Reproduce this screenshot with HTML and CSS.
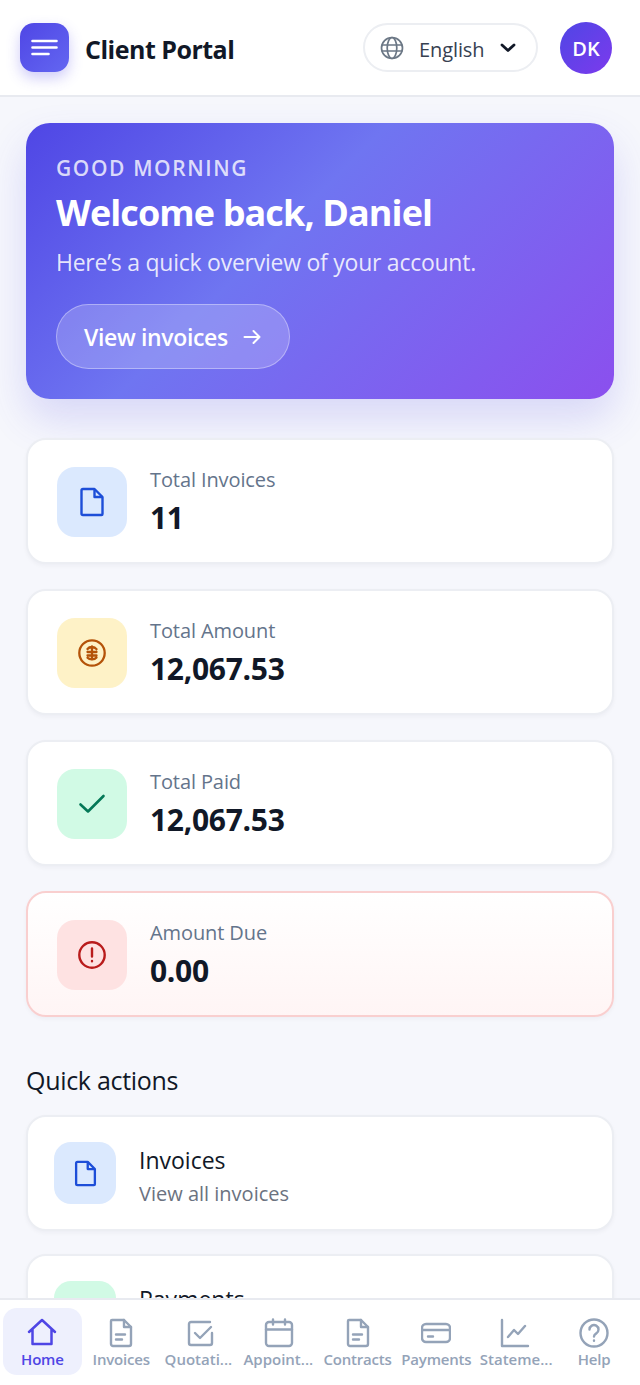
FILE: index.html
```html
<!DOCTYPE html>
<html lang="en">
<head>
    <meta charset="UTF-8">
    <title>Client Portal</title>
    <link rel="stylesheet" href="styles.css">
</head>
<body>
<div class="app">
    <header class="topbar">
        <button class="menu-btn">
            <svg width="30" height="30" viewBox="0 0 30 30" fill="none" stroke="#fff" stroke-width="2.600" stroke-linecap="round"><path d="M2.500 8h24M2.500 14.500h24M2.500 21h16"/></svg>
        </button>
        <div class="brand">Client Portal</div>
        <div class="lang">
            <svg width="24" height="24" viewBox="0 0 24 24" fill="none" stroke="#6b7785" stroke-width="1.700"><circle cx="12" cy="12" r="10.500"/><ellipse cx="12" cy="12" rx="4.800" ry="10.500"/><path d="M1.500 9h21M1.500 15h21"/></svg>
            <span class="lang-name">English</span>
            <svg width="16" height="16" viewBox="0 0 16 16" fill="none" stroke="#111827" stroke-width="2.800" stroke-linecap="round" stroke-linejoin="round"><path d="M2 5l6 5.500L14 5"/></svg>
        </div>
        <div class="avatar">DK</div>
    </header>

    <main class="content">
        <section class="hero">
            <div class="hero-eyebrow">GOOD MORNING</div>
            <h1 class="hero-title">Welcome back, Daniel</h1>
            <p class="hero-sub">Here’s a quick overview of your account.</p>
            <a class="hero-btn">View invoices
                <svg width="18" height="18" viewBox="0 0 18 18" fill="none" stroke="#fff" stroke-width="2" stroke-linecap="round" stroke-linejoin="round"><path d="M1.500 9h15M10.500 3l6 6-6 6"/></svg>
            </a>
        </section>

        <section class="stats">
            <div class="stat">
                <div class="tile tile-blue">
                    <svg width="28" height="32" viewBox="0 0 28 32" fill="none" stroke="#1d4ed8" stroke-width="2.400" stroke-linejoin="round"><path d="M5 3h11.500l8 8v17a1 1 0 0 1-1 1H5a1.500 1.500 0 0 1-1.500-1.500v-23A1.500 1.500 0 0 1 5 3z"/><path d="M16.500 3v8h8"/></svg>
                </div>
                <div class="stat-text"><div class="stat-label">Total Invoices</div><div class="stat-value">11</div></div>
            </div>
            <div class="stat">
                <div class="tile tile-yellow">
                    <svg width="30" height="30" viewBox="0 0 30 30" fill="none" stroke="#b45309" stroke-width="2.300" stroke-linecap="round" stroke-linejoin="round"><circle cx="15" cy="15" r="12.700"/><path d="M10.500 11c1-1.300 2.600-2 4.500-2s3.500.8 4.500 2.200M10.500 14h9M10.500 17.500h9M10.500 19.800c1 1 2.600 1.500 4.500 1.500s3.500-.6 4.500-1.800M15 8.500v13"/></svg>
                </div>
                <div class="stat-text"><div class="stat-label">Total Amount</div><div class="stat-value">12,067.53</div></div>
            </div>
            <div class="stat">
                <div class="tile tile-green">
                    <svg width="30" height="30" viewBox="0 0 30 30" fill="none" stroke="#047857" stroke-width="2.600" stroke-linecap="round" stroke-linejoin="round"><path d="M3.500 15.500l7.500 7L26.500 7"/></svg>
                </div>
                <div class="stat-text"><div class="stat-label">Total Paid</div><div class="stat-value">12,067.53</div></div>
            </div>
            <div class="stat stat-due">
                <div class="tile tile-red">
                    <svg width="30" height="30" viewBox="0 0 30 30" fill="none" stroke="#b91c1c" stroke-width="2.400" stroke-linecap="round"><circle cx="15" cy="15" r="12.700"/><path d="M15 8.500v8M15 21v.300"/></svg>
                </div>
                <div class="stat-text"><div class="stat-label">Amount Due</div><div class="stat-value">0.00</div></div>
            </div>
        </section>

        <h2 class="section-title">Quick actions</h2>

        <section class="actions">
            <div class="action">
                <div class="tile tile-blue tile-sm">
                    <svg width="25" height="29" viewBox="0 0 28 32" fill="none" stroke="#1d4ed8" stroke-width="2.600" stroke-linejoin="round"><path d="M5 3h11.500l8 8v17a1 1 0 0 1-1 1H5a1.500 1.500 0 0 1-1.500-1.500v-23A1.500 1.500 0 0 1 5 3z"/><path d="M16.500 3v8h8"/></svg>
                </div>
                <div class="action-text"><div class="action-title">Invoices</div><div class="action-sub">View all invoices</div></div>
            </div>
            <div class="action">
                <div class="tile tile-green tile-sm"></div>
                <div class="action-text"><div class="action-title">Payments</div><div class="action-sub">&nbsp;</div></div>
            </div>
        </section>
    </main>

    <nav class="tabs">
        <a class="tab tab-active">
            <svg width="30" height="30" viewBox="0 0 30 30" fill="none" stroke="currentColor" stroke-width="2.500" stroke-linejoin="round" stroke-linecap="round"><path d="M2 14L15 2l13 12M5.500 11.500V26h19V11.500"/></svg>
            <span>Home</span>
        </a>
        <a class="tab">
            <svg width="30" height="30" viewBox="0 0 30 30" fill="none" stroke="currentColor" stroke-width="2.400" stroke-linejoin="round" stroke-linecap="round"><path d="M6 2h12l7 7v17a2 2 0 0 1-2 2H7a2 2 0 0 1-2-2V3a1 1 0 0 1 1-1z"/><path d="M18 2v7h7M10 16.500h9M10 21.500h6"/></svg>
            <span>Invoices</span>
        </a>
        <a class="tab tab-cut">
            <svg width="30" height="30" viewBox="0 0 30 30" fill="none" stroke="currentColor" stroke-width="2.400" stroke-linejoin="round" stroke-linecap="round"><path d="M25 4H6a2 2 0 0 0-2 2v19a2 2 0 0 0 2 2h19a2 2 0 0 0 2-2V15"/><path d="M10 15l5 5 11-11"/></svg>
            <span>Quotati...</span>
        </a>
        <a class="tab tab-cut">
            <svg width="30" height="30" viewBox="0 0 30 30" fill="none" stroke="currentColor" stroke-width="2.400" stroke-linejoin="round" stroke-linecap="round"><rect x="2" y="4" width="26" height="24" rx="3"/><path d="M2 11.500h26M9 1.500v5M21 1.500v5"/></svg>
            <span>Appoint...</span>
        </a>
        <a class="tab">
            <svg width="30" height="30" viewBox="0 0 30 30" fill="none" stroke="currentColor" stroke-width="2.400" stroke-linejoin="round" stroke-linecap="round"><path d="M6 2h12l7 7v17a2 2 0 0 1-2 2H7a2 2 0 0 1-2-2V3a1 1 0 0 1 1-1z"/><path d="M18 2v7h7M10 16.500h9M10 21.500h6"/></svg>
            <span>Contracts</span>
        </a>
        <a class="tab">
            <svg width="30" height="30" viewBox="0 0 30 30" fill="none" stroke="currentColor" stroke-width="2.400" stroke-linejoin="round" stroke-linecap="round"><rect x="1" y="6" width="28" height="18" rx="4"/><path d="M1 12h28M7 18.500h5"/></svg>
            <span>Payments</span>
        </a>
        <a class="tab tab-cut">
            <svg width="30" height="30" viewBox="0 0 30 30" fill="none" stroke="currentColor" stroke-width="2.400" stroke-linejoin="round" stroke-linecap="round"><path d="M2 2v26h26M8 19l6-7 4 4 7-8"/></svg>
            <span>Stateme...</span>
        </a>
        <a class="tab">
            <svg width="30" height="30" viewBox="0 0 30 30" fill="none" stroke="currentColor" stroke-width="2.400" stroke-linecap="round" stroke-linejoin="round"><circle cx="15" cy="15" r="13.500"/><path d="M10.500 11.500a4.500 4.500 0 1 1 6.800 3.900c-1.500.9-2.300 1.600-2.300 3.100M15 22.500v.200"/></svg>
            <span>Help</span>
        </a>
    </nav>
</div>
</body>
</html>
```

FILE: styles.css
```css
* {
    box-sizing: border-box;
}

html, body {
    margin: 0;
    height: 100%;
}

body {
    background: #f6f7fc;
    color: #111827;
    font-family: "Open Sans", "Noto Sans", sans-serif;
}

.app {
    height: 100vh;
    display: flex;
    flex-direction: column;
    overflow: hidden;
}

/* top bar */
.topbar {
    height: 97px;
    flex-shrink: 0;
    display: flex;
    align-items: center;
    padding: 0 28px 0 20px;
    background: #fff;
    border-bottom: 2px solid #e8eaf0;
}

.menu-btn {
    width: 49px;
    height: 49px;
    padding: 0;
    border: none;
    border-radius: 14px;
    display: flex;
    align-items: center;
    justify-content: center;
    background: linear-gradient(135deg, #4f46e5, #6366f1);
    box-shadow: 0 6px 14px rgba(79, 70, 229, .28);
}

.brand {
    margin-left: 16px;
    padding-top: 3px;
    font-size: 25px;
    font-weight: 700;
    letter-spacing: -.5px;
}

.lang {
    margin-left: auto;
    width: 175px;
    height: 49px;
    padding: 0 20px 0 15px;
    display: flex;
    align-items: center;
    border: 2px solid #eceef2;
    border-radius: 25px;
    background: #fff;
}

.lang-name {
    flex: 1;
    margin-left: 15px;
    padding-top: 3px;
    font-size: 20px;
    color: #374151;
    letter-spacing: -.1px;
}

.avatar {
    width: 52px;
    height: 52px;
    margin-left: 22px;
    padding-top: 2px;
    border-radius: 50%;
    display: flex;
    align-items: center;
    justify-content: center;
    background: linear-gradient(135deg, #4f46e5, #7c3aed);
    color: #fff;
    font-size: 20px;
    font-weight: 600;
}

/* scrolling part */
.content {
    flex: 1;
    min-height: 0;
    overflow: hidden;
    padding: 26px 26px 0;
}

.hero {
    height: 276px;
    padding: 30px 30px 0;
    border-radius: 24px;
    background: linear-gradient(135deg, #4f46e5 0%, #6f75f1 42%, #8b4fee 100%);
    box-shadow: 0 20px 40px rgba(79, 70, 229, .18);
    color: #fff;
}

.hero-eyebrow {
    font-size: 21px;
    line-height: 30px;
    font-weight: 600;
    letter-spacing: 1.6px;
    color: rgba(255, 255, 255, .78);
}

.hero-title {
    margin: 8px 0 0;
    font-size: 36px;
    line-height: 44px;
    font-weight: 700;
    letter-spacing: -.9px;
}

.hero-sub {
    margin: 10px 0 0;
    font-size: 23px;
    line-height: 34px;
    letter-spacing: -.25px;
    color: rgba(255, 255, 255, .85);
}

.hero-btn {
    margin-top: 25px;
    width: 234px;
    height: 65px;
    display: flex;
    align-items: center;
    gap: 15px;
    padding-left: 27px;
    border: 1px solid rgba(255, 255, 255, .35);
    border-radius: 33px;
    background: rgba(255, 255, 255, .2);
    font-size: 23px;
    font-weight: 600;
    letter-spacing: -.35px;
}

/* stat cards */
.stats {
    margin-top: 39px;
    display: flex;
    flex-direction: column;
    gap: 25px;
}

.stat {
    height: 126px;
    display: flex;
    align-items: center;
    gap: 23px;
    padding: 2px 29px 0;
    border: 2px solid #eceef3;
    border-radius: 20px;
    background: #fff;
    box-shadow: 0 2px 4px rgba(17, 24, 39, .04);
}

.stat-due {
    border-color: #f9cfcf;
    background: linear-gradient(180deg, #fff, #fff5f5);
}

.stat-text {
    margin-top: -3px;
}

.tile {
    width: 70px;
    height: 70px;
    flex-shrink: 0;
    display: flex;
    align-items: center;
    justify-content: center;
    border-radius: 18px;
}

.tile-blue { background: #dbe9fe; }
.tile-yellow { background: #fef2c7; }
.tile-green { background: #d1fae5; }
.tile-red { background: #fee2e2; }

.tile-sm {
    width: 62px;
    height: 62px;
    border-radius: 17px;
}

.stat-label {
    font-size: 20px;
    line-height: 28px;
    font-weight: 500;
    letter-spacing: -.1px;
    color: #64748b;
}

.stat-value {
    margin-top: 6px;
    font-size: 30px;
    line-height: 36px;
    font-weight: 700;
    letter-spacing: -.3px;
}

/* quick actions */
.section-title {
    margin: 46px 0 18px;
    font-size: 25px;
    line-height: 34px;
    font-weight: 500;
    letter-spacing: -.3px;
}

.actions {
    display: flex;
    flex-direction: column;
    gap: 23px;
}

.action {
    height: 116px;
    flex-shrink: 0;
    display: flex;
    align-items: center;
    gap: 23px;
    padding: 0 26px;
    border: 2px solid #eceef3;
    border-radius: 20px;
    background: #fff;
    box-shadow: 0 2px 4px rgba(17, 24, 39, .04);
}

.action-text {
    padding-top: 6px;
}

.action-title {
    font-size: 23px;
    line-height: 32px;
}

.action-sub {
    margin-top: 4px;
    font-size: 20px;
    line-height: 28px;
    color: #6b7280;
}

/* bottom nav */
.tabs {
    height: 87px;
    flex-shrink: 0;
    display: flex;
    padding: 8px 3px 0;
    background: #fff;
    border-top: 2px solid #e8eaf0;
}

.tab {
    width: 78.800px;
    height: 67px;
    flex-shrink: 0;
    display: flex;
    flex-direction: column;
    align-items: center;
    padding-top: 10px;
    border-radius: 14px;
    color: #94a3b8;
    font-size: 15px;
    font-weight: 600;
    letter-spacing: -.2px;
    white-space: nowrap;
}

.tab span {
    margin-top: 1px;
    line-height: 20px;
}

.tab-cut span {
    align-self: flex-start;
    padding-left: 4px;
    letter-spacing: 0;
}

.tab-active {
    color: #4f46e5;
    background: #eef0fd;
}
```
